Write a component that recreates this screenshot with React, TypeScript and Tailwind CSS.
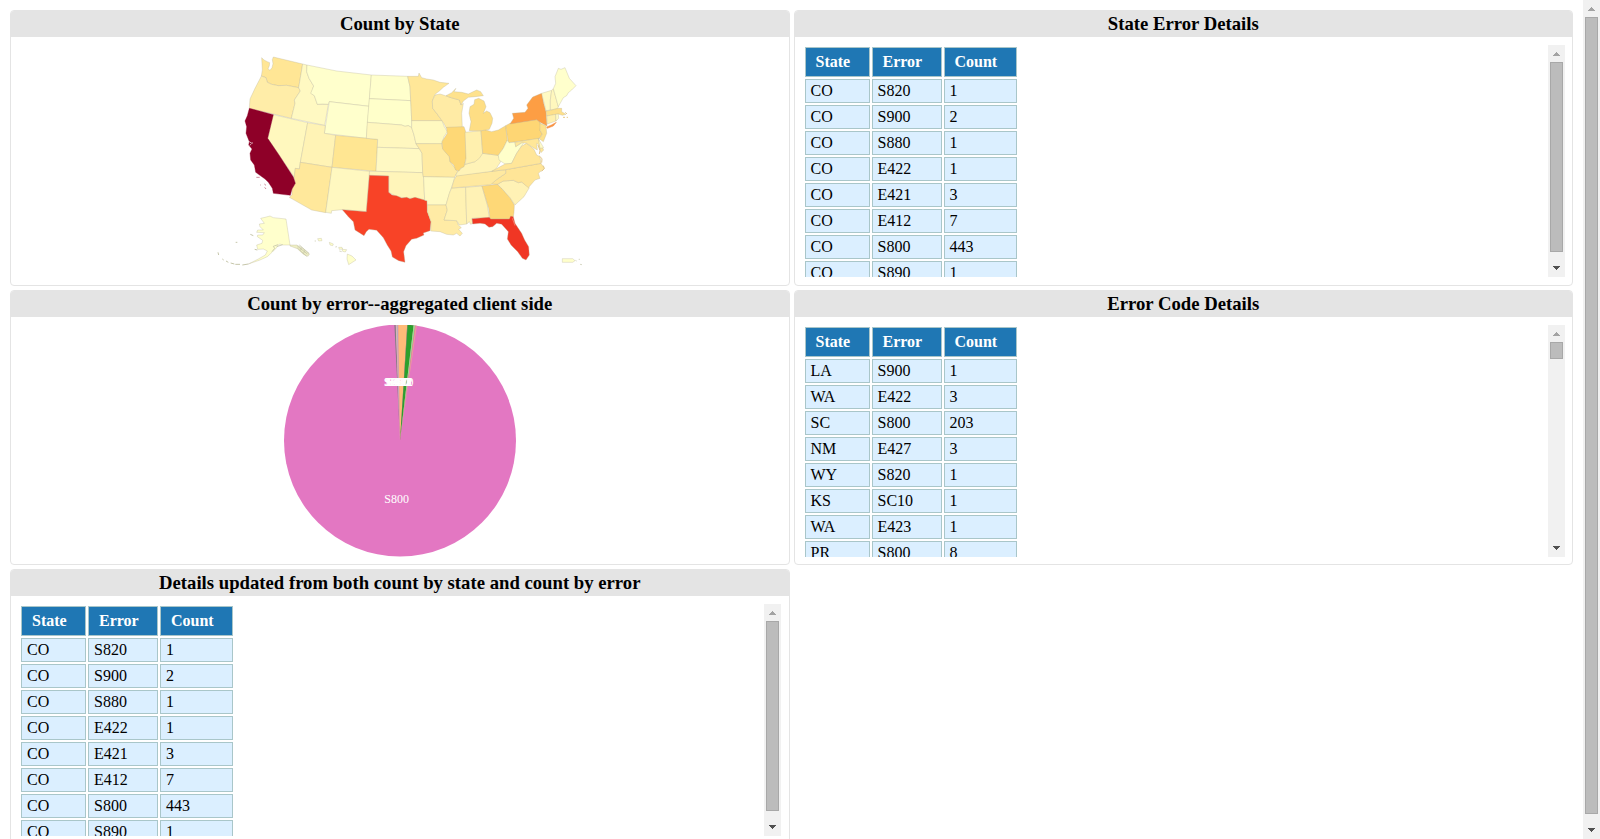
import React from "react";

type Row = [string, string, number];

const stateRows: Row[] = [
  ["CO", "S820", 1],
  ["CO", "S900", 2],
  ["CO", "S880", 1],
  ["CO", "E422", 1],
  ["CO", "E421", 3],
  ["CO", "E412", 7],
  ["CO", "S800", 443],
  ["CO", "S890", 1],
];

const errorRows: Row[] = [
  ["LA", "S900", 1],
  ["WA", "E422", 3],
  ["SC", "S800", 203],
  ["NM", "E427", 3],
  ["WY", "S820", 1],
  ["KS", "SC10", 1],
  ["WA", "E423", 1],
  ["PR", "S800", 8],
];

// [state, fill, outline]
const states: [string, string, string][] = [
  ["WA", "#ffe695", "155,38 162,45 172,50 179,53 178,62 174,72 180,76 186,68 189,56 187,44 190,36 278,57 266,128 230,121 205,122 185,118 172,112 168,98 154,93 157,75"],
  ["OR", "#ffeda8", "154,93 168,98 172,112 185,118 205,122 230,121 266,128 271,138 253,165 255,175 244,220 118,190 120,162 135,130 148,105"],
  ["NV", "#fff8be", "190,209 293,233 271,352 268,372 256,370 254,398 207,330 173,280"],
  ["ID", "#fff9c2", "278,57 291,60 290,80 297,100 311,123 304,145 313,152 322,178 355,178 344,241 244,220 255,175 253,165 271,138 266,128"],
  ["MT", "#ffffcc", "291,60 380,78 484,90 477,184 358,170 355,178 338,177 322,178 313,152 302,145 311,123 297,100 290,80"],
  ["WY", "#ffffcc", "358,170 477,184 469,280 343,265"],
  ["UT", "#fff3b5", "293,233 346,242 343,265 377,271 366,367 271,352"],
  ["CO", "#ffe692", "377,271 503,283 498,379 366,367"],
  ["AZ", "#ffe89b", "271,352 366,367 347,503 305,495 238,457 246,450 246,432 256,415 252,398 256,370 268,372"],
  ["NM", "#fff8c0", "366,367 479,379 469,500 397,494 365,497 364,505 347,502"],
  ["ND", "#ffffcc", "484,90 593,94 600,125 602,167 478,161"],
  ["SD", "#ffffca", "478,161 602,167 603,180 605,227 605,248 595,242 585,244 575,240 472,232"],
  ["NE", "#fff7bf", "472,232 575,240 585,244 595,242 605,248 612,270 618,297 628,311 502,307 503,283 469,280"],
  ["KS", "#fff9c3", "502,307 628,311 636,325 638,383 498,379"],
  ["OK", "#fff5ba", "478,379 498,379 638,383 641,400 644,466 625,460 590,460 560,455 536,442 536,393 478,391"],
  ["TX", "#f84327", "478,391 536,393 536,442 546,450 560,452 575,459 590,457 600,461 615,457 630,461 651,467 652,500 663,530 660,557 640,564 642,570 620,580 605,583 588,602 581,620 585,652 566,647 547,636 543,618 532,601 520,578 500,556 477,553 469,560 462,572 435,555 430,530 415,515 397,494 469,500"],
  ["MN", "#ffe798", "593,94 625,94 627,84 635,98 650,102 670,105 690,112 717,115 700,127 688,138 675,148 667,168 668,190 680,205 696,227 605,227 603,180 602,167 600,125"],
  ["IA", "#fff9c0", "605,227 696,227 703,245 712,260 702,275 695,297 618,296 612,270 605,248"],
  ["MO", "#ffeba3", "618,296 695,296 698,310 718,335 720,350 737,372 743,380 737,390 734,397 640,395 638,383 636,325 628,311"],
  ["AR", "#fffac4", "640,395 734,397 730,412 720,440 708,480 652,480 651,467 644,466 641,400"],
  ["LA", "#ffeba5", "652,480 708,480 712,495 702,525 740,527 745,540 754,548 746,553 757,565 750,573 740,565 730,570 710,568 690,560 662,558 663,530 652,500"],
  ["MS", "#fff2b3", "725,429 767,427 770,537 748,540 740,527 702,525 712,495 708,480 718,445"],
  ["AL", "#fff2b5", "767,427 816,423 832,480 838,518 786,520 788,535 782,538 778,530 770,537"],
  ["GA", "#fed877", "816,423 862,418 875,430 900,458 913,480 912,502 910,515 900,522 840,522 836,490"],
  ["FL", "#f03624", "786,521 838,517 842,522 898,522 902,513 910,515 915,535 935,565 944,585 956,605 958,630 948,645 937,640 923,620 911,608 903,600 892,582 895,560 875,538 860,535 848,545 837,547 825,537 810,535 788,537"],
  ["SC", "#fff2b5", "862,418 880,408 910,406 925,413 935,411 958,428 942,455 915,480 900,458 875,430"],
  ["NC", "#ffe597", "842,417 862,402 887,385 887,374 993,355 1003,370 985,385 990,400 975,405 955,428 935,411 925,413 910,406 880,408 862,418"],
  ["TN", "#ffe9a0", "725,429 732,405 740,391 887,374 887,385 862,402 842,419"],
  ["KY", "#fff3b7", "737,391 744,378 752,371 765,358 795,350 818,325 842,328 865,331 872,350 857,373 845,379 740,393"],
  ["WI", "#ffeba5", "675,150 690,147 700,150 720,157 748,165 753,180 760,175 755,205 757,247 708,248 703,238 696,227 680,205 668,190 667,168"],
  ["IL", "#fed876", "709,247 762,245 767,260 768,340 762,365 752,370 747,378 737,375 731,360 720,350 718,335 698,312 696,290 712,265"],
  ["IN", "#fff0ae", "765,262 813,257 818,325 808,340 795,350 765,358 768,340"],
  ["OH", "#fed97a", "813,257 827,255 845,260 865,255 887,242 892,285 880,310 865,331 842,328 818,325"],
  ["MI", "#fee28d", "708,152 725,143 738,130 732,140 755,142 775,147 800,135 812,140 820,152 795,155 775,157 760,168 753,180 748,165 720,157"],
  ["MI", "#fede84", "778,257 783,230 777,205 780,185 792,178 794,164 806,160 822,168 828,185 820,205 830,198 840,203 848,220 846,235 838,253 815,257"],
  ["PA", "#fed674", "887,242 900,235 980,224 990,232 992,245 990,256 997,267 987,281 895,293"],
  ["NY", "#fd9e44", "900,237 911,220 907,205 945,202 954,190 950,180 968,156 995,145 1001,175 1008,200 1011,243 990,232 980,224"],
  ["NJ", "#fee18a", "990,235 1008,242 1010,265 1000,290 988,281 997,268 990,256"],
  ["VT", "#fffac4", "995,145 1025,136 1021,165 1021,195 1008,197"],
  ["NH", "#fff7bd", "1025,136 1030,131 1045,185 1042,191 1021,195 1021,165"],
  ["ME", "#ffffcc", "1030,131 1037,115 1035,95 1045,70 1053,73 1065,68 1078,100 1098,122 1085,135 1075,143 1070,152 1060,158 1045,185"],
  ["MA", "#fee08a", "1008,198 1021,196 1045,190 1055,190 1055,200 1068,208 1057,211 1045,207 1010,213"],
  ["CT", "#fff0ae", "1010,213 1037,208 1038,228 1012,237"],
  ["RI", "#fffac4", "1037,208 1045,207 1046,220 1038,228"],
  ["WV", "#ffffca", "892,285 897,293 915,292 917,305 945,288 935,302 920,325 905,355 885,357 867,345 865,331 880,310"],
  ["VA", "#ffe699", "845,379 885,357 905,355 920,325 935,303 950,295 972,313 980,330 990,335 993,355 887,374"],
  ["MD", "#ffe798", "915,292 985,280 990,295 1001,315 993,323 986,300 980,295 982,315 965,305 950,295 935,293 917,305"],
  ["DE", "#fffbc8", "985,280 990,290 1001,308 990,310"],
  ["AK", "#ffffcc", "152,520 165,517 180,513 190,518 228,522 240,600 220,600 208,597 198,610 186,622 172,635 150,645 115,657 145,642 166,630 172,618 160,612 143,613 140,600 156,595 158,586 142,575 143,570 158,570 163,563 140,562 143,555 160,555 150,545 148,537 163,535"],
  ["AK", "#efefc4", "240,600 260,600 275,608 298,627 294,634 280,628 262,611 240,603"],
  ["HI", "#ffffcc", "412,627 426,633 438,645 416,659 411,642"],
  ["HI", "#ffffcc", "386,607 396,607 398,612 388,613"],
  ["HI", "#ffffcc", "358,592 370,597 368,602 360,600"],
  ["HI", "#ffffcc", "396,613 410,614 406,621 398,619"],
  ["HI", "#ffffcc", "323,581 334,580 336,587 326,588"],
  ["PR", "#ffffcc", "1057,641 1088,641 1095,647 1088,652 1057,652"],
];

const california =
  "118,190 190,209 173,280 207,330 250,396 256,415 246,432 241,451 190,445 187,430 175,412 165,402 137,382 133,360 122,345 120,325 126,312 116,300 118,290 108,265 110,245 105,228 112,212";

function UsMap() {
  return (
    <svg className="h-[230px] w-[390px]" viewBox="0 0 1170 690">
      <g stroke="#b9b59a" strokeOpacity="0.5" strokeWidth="2" strokeLinejoin="round">
        {states.map(([name, fill, points], i) => (
          <polygon key={name + i} fill={fill} points={points} />
        ))}
      </g>
      <polygon points={california} fill="#8e0028" stroke="#8e0028" strokeWidth="1" />
      <polygon points="1010,246 1024,240 1039,232 1030,243 1012,250" fill="#fb9440" stroke="#f08f48" strokeWidth="1.5" />
      <g fill="none" stroke="#ffffff" strokeWidth="2">
        <path d="M118 290 l6 4 l5 0 M119 301 l5 -4" />
        <path d="M907 520 l8 22" stroke="#f9b0a0" strokeWidth="1.5" />
      </g>
      <g fill="none" stroke="#8e0028" strokeOpacity="0.55" strokeWidth="2.5">
        <path d="M139 397 h10 M163 417 l5 4 M164 427 l4 5 M150 420 h2" />
      </g>
      <g fill="none" stroke="#c6c6aa" strokeWidth="3">
        <path d="M115 657 l-18 3 M90 658 l-14 0 M73 657 l-11 -3 M55 652 l-7 -4 M41 645 l-4 -3 M24 622 l2 8 M121 568 l9 4 M77 592 l5 0 M134 613 l8 2" />
        <path d="M186 620 l8 -10 l-4 -6 l14 -5 M200 605 l18 -6 M262 603 l30 24 M268 600 l30 26 M262 609 l28 25 M274 608 l-2 8 M284 616 l-3 9" strokeWidth="2.5" />
        <path d="M376 606 l5 -1 M388 618 l7 2 M314 588 l4 0 M1096 646 l4 2 M1106 643 l4 0 M1110 658 l6 1" strokeWidth="2" />
      </g>
      <g fill="none" stroke="#e6c989" strokeWidth="3">
        <path d="M1066 202 l5 5 M1059 217 l6 0 M1070 217 l4 0 M984 300 l6 17 l-2 10 M988 333 l8 8 l-1 12 M1000 362 l3 9 l-8 8" />
      </g>
    </svg>
  );
}

const CX = 122;
const CY = 115.5;
const R = 116;

function wedge(from: number, to: number) {
  const point = (dx: number) => `${CX + dx} ${CY - Math.sqrt(R * R - dx * dx)}`;
  return `M${CX} ${CY} L${point(from)} A${R} ${R} 0 0 1 ${point(to)} Z`;
}

const wedges: [number, number, string][] = [
  [-5.6, -4.4, "#7f7f7f"],
  [-4.1, -3.4, "#c9ddb0"],
  [-3.4, -2.7, "#dbb0b5"],
  [-2.7, -2.2, "#8fc6c9"],
  [-2.2, -1.7, "#eab08a"],
  [-1.7, 7.2, "#ffbb78"],
  [7.2, 7.6, "#5b9a3e"],
  [7.6, 13.6, "#2ca02c"],
  [13.6, 15.2, "#98df8a"],
  [15.2, 15.8, "#e07a86"],
  [15.8, 16.9, "#ef9a9d"],
];

const crowded: [string, number][] = [
  ["S820", -3.8],
  ["S900", -3.4],
  ["S880", -3.0],
  ["E427", -2.2],
  ["S890", -1.8],
  ["E423", -1.2],
  ["E422", -0.6],
  ["E412", 0],
  ["E421", 0.3],
  ["SC10", 0.2],
];

function Pie() {
  return (
    <svg className="h-[232px] w-[244px]" viewBox="0 0 244 232">
      <circle cx={CX} cy={CY} r={R} fill="#e377c2" />
      {wedges.map(([from, to, fill]) => (
        <path key={from} d={wedge(from, to)} fill={fill} />
      ))}
      <g fill="#ffffff" fontSize="12" textAnchor="middle">
        <text x="118.6" y="177.5">S800</text>
        {crowded.map(([label, dx]) => (
          <text key={label} x={CX + dx} y="61.3">{label}</text>
        ))}
      </g>
    </svg>
  );
}

function Arrow({ down = false }: { down?: boolean }) {
  return (
    <svg className="h-[17px] w-[17px] shrink-0" viewBox="0 0 17 17" shapeRendering="crispEdges">
      {down ? (
        <path d="M5 6h7v1h-1v1h-1v1h-1v1h-1v-1h-1v-1h-1v-1h-1z" fill="#505050" />
      ) : (
        <path d="M5 11h7v-1h-1v-1h-1v-1h-1v-1h-1v1h-1v1h-1v1h-1z" fill="#a3a3a3" />
      )}
    </svg>
  );
}

function Scrollbar({ thumb }: { thumb: string }) {
  return (
    <div className="flex h-full w-[17px] shrink-0 flex-col justify-between bg-[#f1f1f1]">
      <div className="flex flex-col items-center">
        <Arrow />
        <div className={`w-[13px] border border-[#a8a8a8] bg-[#bcbcbc] ${thumb}`} />
      </div>
      <Arrow down />
    </div>
  );
}

function Panel({ title, children }: { title: string; children: React.ReactNode }) {
  return (
    <section className="flex h-[275.67px] flex-col overflow-hidden rounded-[4px] border border-[#e4e4e4] bg-white">
      <h3 className="h-[26px] shrink-0 bg-[#e4e4e4] text-center text-[18.72px] leading-[26px] font-bold">{title}</h3>
      {children}
    </section>
  );
}

function DataTable({ rows, thumb }: { rows: Row[]; thumb: string }) {
  const widths = ["w-[65px]", "w-[70px]", "w-[73px]"];
  return (
    <div className="mt-2 mr-[7.4px] ml-2 flex h-[232px] justify-between overflow-hidden">
      <table className="h-max table-fixed border-separate border-spacing-[2px] text-[16px] leading-[18px]">
        <thead>
          <tr>
            {["State", "Error", "Count"].map((name, i) => (
              <th
                key={name}
                className={`h-[30px] border border-[#a9c6c9] bg-[#1f77b4] p-0 pl-[10px] text-left font-bold text-white ${widths[i]}`}
              >
                {name}
              </th>
            ))}
          </tr>
        </thead>
        <tbody>
          {rows.map((row, i) => (
            <tr key={i}>
              {row.map((cell, j) => (
                <td key={j} className="h-[24px] border border-[#a9c6c9] bg-[#dbefff] p-0 pl-[5px]">
                  {cell}
                </td>
              ))}
            </tr>
          ))}
        </tbody>
      </table>
      <Scrollbar thumb={thumb} />
    </div>
  );
}

export default function App() {
  return (
    <div className="flex h-screen overflow-hidden bg-white font-['Liberation_Serif',serif] text-black">
      <main className="grid flex-1 grid-cols-2 content-start gap-1 p-[10px]">
        <Panel title="Count by State">
          <div className="flex justify-center pt-2 pl-[10px]">
            <UsMap />
          </div>
        </Panel>
        <Panel title="State Error Details">
          <DataTable rows={stateRows} thumb="h-[190px]" />
        </Panel>
        <Panel title="Count by error--aggregated client side">
          <div className="flex justify-center pt-2">
            <Pie />
          </div>
        </Panel>
        <Panel title="Error Code Details">
          <DataTable rows={errorRows} thumb="h-[17px]" />
        </Panel>
        <Panel title="Details updated from both count by state and count by error">
          <DataTable rows={stateRows} thumb="h-[190px]" />
        </Panel>
      </main>
      <Scrollbar thumb="h-[797px]" />
    </div>
  );
}
